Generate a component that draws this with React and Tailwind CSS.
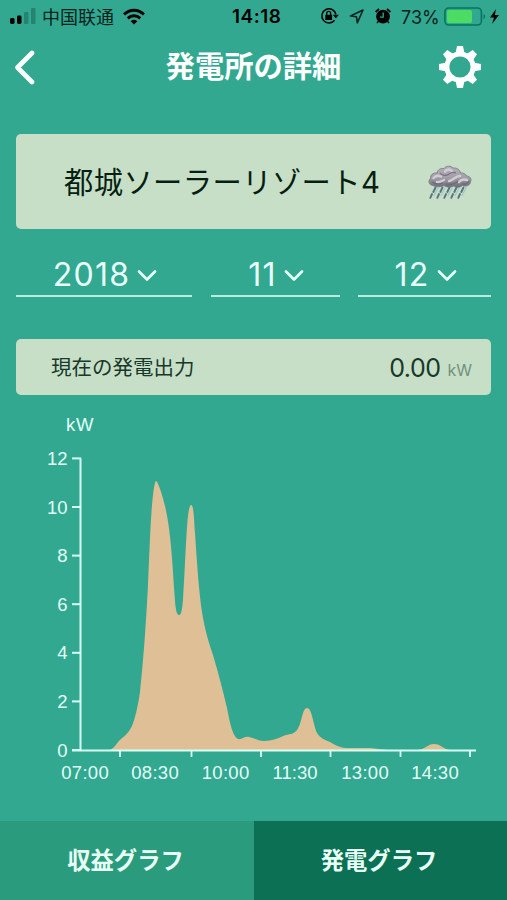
import React from 'react'

const yTicks = [12, 10, 8, 6, 4, 2, 0]
const xLabels = [
  { x: 85, text: '07:00' },
  { x: 155, text: '08:30' },
  { x: 225.5, text: '10:00' },
  { x: 295, text: '11:30' },
  { x: 365, text: '13:00' },
  { x: 435, text: '14:30' },
]
const xTicks = [120, 191.5, 261, 330.5, 400.5, 470]

// chart svg starts at y = 410 of the screen
const yFor = (v) => 750 - v * 24.3

const StatusBar = () => (
  <div className="flex h-8 items-center text-black">
    <svg className="ml-[9px] h-4 w-7" viewBox="0 0 28 16">
      <rect x="1" y="10" width="4.5" height="6" rx="1.4" />
      <rect x="8" y="7.5" width="4.5" height="8.5" rx="1.4" />
      <rect x="15" y="4" width="4.5" height="12" rx="1" opacity=".22" />
      <rect x="22" y="0" width="4.5" height="16" rx="1" opacity=".22" />
    </svg>
    <span className="ml-[5px] w-[73px] whitespace-nowrap font-['Noto_Sans_CJK_SC',sans-serif] text-[18px] leading-8 text-[#04221b]">中国联通</span>
    <svg className="ml-2 h-[17px] w-[22px]" viewBox="0 0 22 17" fill="none" stroke="#000" strokeWidth="2.9">
      <path d="M1 6.5C6.5 .8 15.5 .8 21 6.5" />
      <path d="M4.7 10.4c3.6-3.6 9-3.6 12.6 0" />
      <path d="M11 16.5 7.6 13.2c2-1.8 4.8-1.8 6.8 0Z" fill="#000" stroke="none" />
    </svg>
    <span className="ml-[87px] w-[51px] whitespace-nowrap pt-[3px] text-[19px] font-semibold tracking-[0.5px]">14:18</span>
    <svg className="ml-[37px] h-[18px] w-[19px]" viewBox="0 0 19 18" fill="none" stroke="#000" strokeWidth="1.5">
      <path d="M14.6 13.2A7.1 7.1 0 1 1 15.9 7.4" />
      <path d="M12.8 7.8h6L15.9 11.6Z" fill="#000" stroke="none" />
      <rect x="5.3" y="7.8" width="6.8" height="5.2" rx=".6" fill="#000" stroke="none" />
      <path d="M6.7 8V6.4a2 2 0 0 1 4 0V8" strokeWidth="1.3" />
    </svg>
    <svg className="ml-[10px] h-4 w-4" viewBox="0 0 16 16" fill="none" stroke="#06241c" strokeWidth="1.6" strokeLinejoin="round">
      <path d="M14 2 1.5 8l6 .8.8 6Z" />
    </svg>
    <svg className="ml-[9px] h-[18px] w-[18px]" viewBox="0 0 18 18">
      <circle cx="9" cy="9.6" r="6.9" />
      <path d="M1.6 5 5 2M16.4 5 13 2" stroke="#000" strokeWidth="1.8" />
      <path d="m4.3 14.3-1.3 1.9m10.7-1.9 1.3 1.9" stroke="#000" strokeWidth="1.4" />
      <path d="M9.2 5.4v4.8H6" fill="none" stroke="#32a891" strokeWidth="1.3" />
    </svg>
    <span className="ml-[9px] w-[39px] whitespace-nowrap pt-0.5 text-[18px] text-[#04221b]">73%</span>
    <svg className="ml-[4px] h-[19px] w-[58px]" viewBox="0 0 58 19">
      <rect x=".9" y="1" width="36.5" height="17" rx="4" fill="none" stroke="#08735e" strokeWidth="1.6" />
      <rect x="3" y="3" width="25" height="13" rx="2" fill="#4cdc64" />
      <path d="M39.5 7c2 .6 2 4.4 0 5Z" fill="#08735e" />
      <path d="M52 2 46 10.5h4l-2 6.5 7-9h-4.2Z" />
    </svg>
  </div>
)

const Header = () => (
  <header className="flex h-[70px] items-center justify-between pl-[14px] pr-[26px]">
    <svg className="h-9 w-[22px]" viewBox="0 0 22 36" fill="none" stroke="#fff" strokeWidth="4.6" strokeLinecap="round" strokeLinejoin="round">
      <path d="M18 4 3.5 18.5 18 33" />
    </svg>
    <h1 className="ml-[32px] text-[29.3px] font-bold leading-[70px]">発電所の詳細</h1>
    <svg className="h-[42px] w-[42px]" viewBox="-21 -21 42 42">
      <circle r="13.1" fill="none" stroke="#fff" strokeWidth="5" />
      {[0, 45, 90, 135, 180, 225, 270, 315].map((a) => (
        <path key={a} d="M-4.6-13-3-21H3L4.6-13Z" fill="#fff" transform={`rotate(${a})`} />
      ))}
    </svg>
  </header>
)

const RainCloud = () => (
  <svg className="h-9 w-11" viewBox="0 0 44 36">
    <defs>
      <linearGradient id="cloud" x1="0" y1="0" x2="0" y2="1">
        <stop offset="0" stopColor="#b4b1b9" />
        <stop offset=".55" stopColor="#a29fa9" />
        <stop offset="1" stopColor="#6d6976" />
      </linearGradient>
    </defs>
    <path
      d="M5 21.5C.5 21 0 16 2.5 14.5 2 11 5 8.5 9 9 9.5 5.5 13 4 16 4.5 18 1.5 23 1.5 25 4 29 3.5 32 6 32.5 9 35 8.5 38 10 38.5 12 42 12 44 15 42.5 18 42 21.5 38 23 34.5 21.5 32 24 28 23.5 26 22 22 24 18 23 16 21.5 12 23.5 8 23 5 21.5Z"
      fill="url(#cloud)"
      stroke="#77747f"
      strokeWidth=".8"
    />
    <path d="M5.5 14C8 11 11 11.5 13 12.5M17 7.5c2-2.5 5-2.5 7-.5M21 17c4-.5 6-5 11-5M31 18c2-2.5 5-3 8-2M9 18c3 .5 5-1 7-2" fill="none" stroke="#d0cdd4" strokeWidth="2.4" strokeLinecap="round" />
    <path d="M12 9c2 3 6 3 9 1s5-2 7-1M4 18c4 3 8 2 11 1M18 20c5 1 9 0 12-3M34 20c3 .5 6-1 7-3" fill="none" stroke="#67636f" strokeWidth="1.2" opacity=".75" />
    {[7, 14, 21, 28, 35].map((x) => (
      <g key={x} fill="none" strokeLinecap="round">
        <path d={`M${x + 0.5} 23.5l-2.2 4.5M${x - 3} 30l-1.7 3.8`} stroke="#56757f" strokeWidth="1.9" />
        <path d={`M${x + 3} 24l-4 7.5`} stroke="#a9c6cb" strokeWidth="1.4" />
      </g>
    ))}
  </svg>
)

const DateSelect = ({ value, className }) => (
  <button className={`flex h-[45px] items-center justify-center gap-[7px] border-b-2 border-[#b9ece0] pl-0.5 pt-0.5 text-[32px] ${className}`}>
    <span className="tracking-[1.3px]">{value}</span>
    <svg className="mt-0.5 h-3 w-5" viewBox="0 0 20 12" fill="none" stroke="#e8fff9" strokeWidth="2.6" strokeLinecap="round" strokeLinejoin="round">
      <path d="m2 1.5 8 8 8-8" />
    </svg>
  </button>
)

const Chart = () => (
  <svg className="block h-[411px] w-full" viewBox="0 410 507 411" fill="#e2fff6" fontSize="18.5">
    <text x="66" y="431" textLength="27.5">kW</text>
    <path
      d="M110 750C115 748 117 742 121 739C126 735 129 732 132 726C135 719 138 706 140 692C143 665 146 625 148 585C150 540 151 506 154 488C154.8 483 155.5 480.5 156.5 481C159 485 162 494 165 506C170 527 172 553 174.5 594C175.5 611 177 615 179 615C181 615 182 611 183 600C185 571 186 534 188 516C189 508 190 505 191 505C194 505 194 521 195 533C197 564 199 592 202 612C205 631 209 643 213 655C218 672 223 691 227 708C230 724 233 737 238 739C241 740 245 736 249 737C254 738 258 741 264 741C271 741 279 738 286 735C291 734 294 734 297 730C302 724 302 708 307 708C312 708 313 724 317 733C320 738 325 740 330 742C337 746 341 748 349 748L370 748L388 750L418 750C425 749 428 744 434 744C441 744 443 749 450 750Z"
      fill="#dfc096"
    />
    <path d="M80.5 458V750M72 750.5H476" stroke="#d8fff5" strokeWidth="2" fill="none" />
    {yTicks.map((v) => (
      <g key={v}>
        <path d={`M72 ${yFor(v)}H81`} stroke="#d8fff5" strokeWidth="2" />
        <text x="67.5" y={yFor(v) + 6.5} textAnchor="end">{v}</text>
      </g>
    ))}
    {xTicks.map((x) => (
      <path key={x} d={`M${x} 750v7`} stroke="#d8fff5" strokeWidth="1.8" />
    ))}
    {xLabels.map((l) => (
      <text key={l.text} x={l.x} y="779" textAnchor="middle" textLength={l.text === '11:30' ? 45 : 47.5}>{l.text}</text>
    ))}
  </svg>
)

const App = () => (
  <div className="flex h-[900px] w-[507px] flex-col overflow-hidden bg-[#32a891] font-['Inter','Noto_Sans_CJK_JP',sans-serif] text-white">
    <StatusBar />
    <Header />

    <div className="mx-4 mt-8 flex h-[95px] items-center rounded-[5px] bg-[#c8dfc7] pl-12 pr-[19px] text-[#071f12]">
      <span className="flex-1 whitespace-nowrap pt-[3px] text-[29.3px] tracking-[0.4px]">都城ソーラーリゾート4</span>
      <RainCloud />
    </div>

    {/* Date pickers */}
    <div className="mx-4 mt-[23px] flex justify-between text-[#e8fff9]">
      <DateSelect value="2018" className="w-44" />
      <DateSelect value="11" className="w-[129px]" />
      <DateSelect value="12" className="w-[133px]" />
    </div>

    {/* Current output */}
    <div className="mx-4 mt-[42px] flex h-14 items-center rounded-[5px] bg-[#c8dfc7] pl-[35px] pr-[19px] text-[#17382a]">
      <span className="flex-1 pt-0.5 text-[20.5px]">現在の発電出力</span>
      <span className="pt-[3px] text-[25px] tracking-[-0.5px]">0.00</span>
      <span className="ml-[7px] mt-1.5 text-[16px] text-[#71917f]">kW</span>
    </div>

    <div className="mt-[15px] font-['Liberation_Sans',sans-serif]">
      <Chart />
    </div>

    {/* Bottom tabs */}
    <div className="flex h-[79px] text-[23.3px] font-bold">
      <button className="w-[254px] bg-[#2b9b7d] pr-[3px] pt-0.5 text-[#e8fff6]">収益グラフ</button>
      <button className="flex-1 bg-[#0b7054] pr-[3px] pt-0.5 text-[#e8fff6]">発電グラフ</button>
    </div>
  </div>
)

export default App
